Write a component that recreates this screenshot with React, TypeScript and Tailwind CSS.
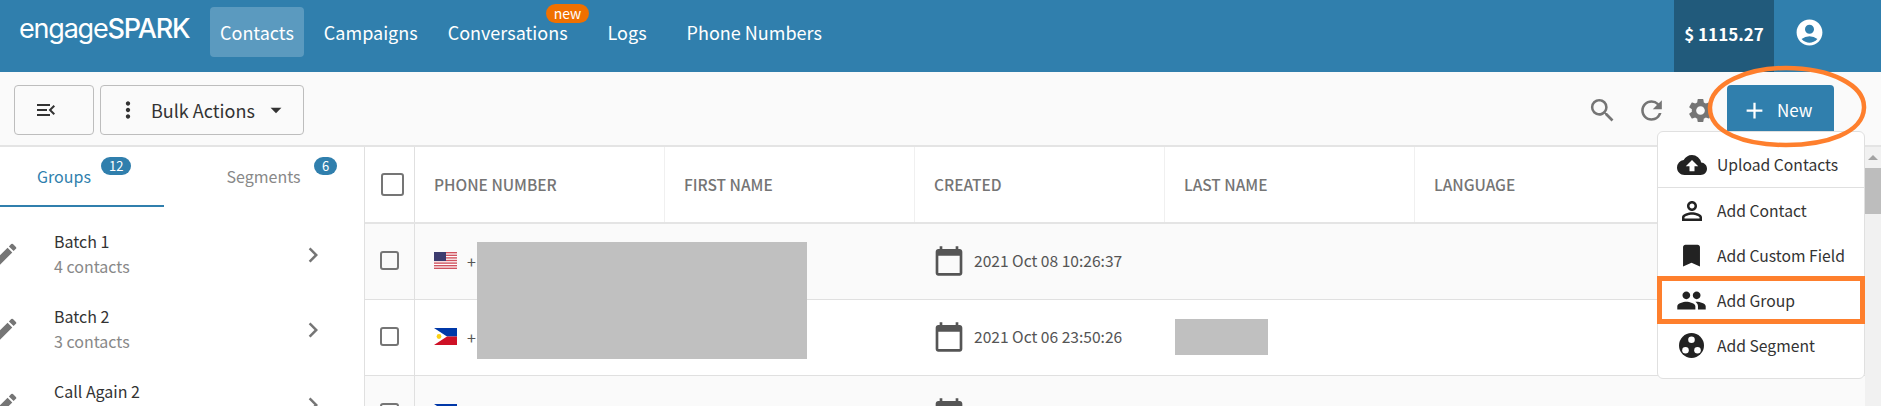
import React from 'react';
import {
  MdAccountCircle,
  MdAdd,
  MdArrowDropDown,
  MdBookmark,
  MdCalendarToday,
  MdChevronRight,
  MdCloudUpload,
  MdEdit,
  MdMenuOpen,
  MdMoreVert,
  MdOutlinePermIdentity,
  MdPeople,
  MdRefresh,
  MdSearch,
  MdSettings,
} from 'react-icons/md';

const groups = [
  { name: 'Batch 1', count: '4 contacts' },
  { name: 'Batch 2', count: '3 contacts' },
  { name: 'Call Again 2', count: '' },
];

const columns = [
  { label: 'Phone Number', width: 'w-[250px]' },
  { label: 'First Name', width: 'w-[250px]' },
  { label: 'Created', width: 'w-[250px]' },
  { label: 'Last Name', width: 'w-[250px]' },
  { label: 'Language', width: 'flex-1' },
];

const rows = [
  { flag: 'us', created: '2021 Oct 08 10:26:37', phone: true, striped: true },
  { flag: 'ph', created: '2021 Oct 06 23:50:26', phone: true, striped: false },
  { flag: 'ph', created: '', phone: false, striped: true },
];

const SegmentIcon = () => (
  <svg width="25" height="25" viewBox="0 0 25 25">
    <circle cx="12.5" cy="12.5" r="12.5" fill="#222" />
    <circle cx="12.5" cy="6.8" r="3.3" fill="#fff" />
    <circle cx="6.5" cy="17.3" r="3.3" fill="#fff" />
    <circle cx="18.5" cy="17.3" r="3.3" fill="#fff" />
  </svg>
);

const menuItems = [
  { label: 'Add Contact', icon: <MdOutlinePermIdentity className="text-[30px]" /> },
  { label: 'Add Custom Field', icon: <MdBookmark className="text-[29px]" /> },
  { label: 'Add Group', icon: <MdPeople className="text-[31px]" />, marked: true },
  { label: 'Add Segment', icon: <SegmentIcon /> },
];

const Flag = ({ kind }: { kind: string }) =>
  kind === 'us' ? (
    <svg width="23" height="17" viewBox="0 0 23 17" className="shrink-0">
      <rect width="23" height="17" fill="#fff" />
      {[0, 2.6, 5.2, 7.8, 10.4, 13, 15.6].map(y => (
        <rect key={y} y={y} width="23" height="1.4" fill="#d0535f" />
      ))}
      <rect width="12" height="9" fill="#3c3b6e" />
    </svg>
  ) : (
    <svg width="23" height="17" viewBox="0 0 23 17" className="shrink-0">
      <rect width="23" height="8.5" fill="#0038a8" />
      <rect y="8.5" width="23" height="8.5" fill="#ce1126" />
      <path d="M0 0 L13 8.5 L0 17 Z" fill="#fff" />
      <circle cx="5" cy="8.5" r="2.4" fill="#fcd116" />
    </svg>
  );

const App = () => {
  return (
    <div className="relative h-[406px] overflow-hidden bg-white font-['Noto_Sans_CJK_SC','Noto_Sans',sans-serif] text-[#333]">
      {/* Top nav */}
      <header className="flex h-[72px] items-stretch bg-[#307fad] text-white">
        <div className="ml-[19px] mt-[12px] w-[191px] font-['Inter',sans-serif] text-[27px] leading-[34px] tracking-[-1.2px]">
          engage<span className="font-medium">SPARK</span>
        </div>
        <nav className="mt-[7px] flex h-[50px] items-center gap-[10px] text-[18px] leading-[50px]">
          <a className="rounded bg-[#5b9abf] px-[10px]">Contacts</a>
          <a className="px-[10px]">Campaigns</a>
          <a className="relative mr-[10px] px-[10px]">
            Conversations
            <span className="absolute left-[108px] top-[-3px] rounded-full bg-[#f07000] px-[8px] text-[14px] leading-[19px]">new</span>
          </a>
          <a className="mr-[10px] px-[10px]">Logs</a>
          <a className="px-[10px]">Phone Numbers</a>
        </nav>
        <div className="ml-auto flex w-[100px] items-center justify-center bg-[#215a7b] pb-[4px] text-[17px] font-bold">$ 1115.27</div>
        <div className="flex w-[107px] items-center justify-center pb-[8px]">
          <MdAccountCircle className="mr-[37px] text-[31px]" />
        </div>
      </header>

      {/* Toolbar */}
      <div className="flex h-[75px] items-start border-b-2 border-[#e4e4e4] bg-[#fafafa] pt-[13px]">
        <button className="ml-[14px] flex h-[50px] w-[80px] items-center rounded border border-[#bdbdbd] pl-[19px]">
          <MdMenuOpen className="text-[24px]" />
        </button>
        <button className="ml-[6px] flex h-[50px] w-[204px] items-center rounded border border-[#bdbdbd] pl-[14px] text-[18px]">
          <MdMoreVert className="text-[26px]" />
          <span className="ml-[10px]">Bulk Actions</span>
          <MdArrowDropDown className="ml-[8px] text-[26px]" />
        </button>
        <div className="ml-auto flex h-[50px] items-center text-[#757575]">
          <MdSearch className="text-[31px]" />
          <MdRefresh className="ml-[18px] text-[31px]" />
          <MdSettings className="ml-[19px] text-[29px]" />
          <button className="ml-[12px] mr-[47px] flex h-[50px] w-[107px] items-center rounded bg-[#307fad] pl-[14px] text-[17px] text-white">
            <MdAdd className="text-[27px]" />
            <span className="ml-[9px]">New</span>
          </button>
        </div>
      </div>

      <div className="flex h-[259px]">
        {/* Groups / segments sidebar */}
        <aside className="w-[365px] shrink-0 overflow-hidden border-r border-[#e0e0e0]">
          <div className="mb-[10px] flex h-[60px] text-[16px]">
            <div className="relative flex w-[164px] items-center justify-center border-b-2 border-[#307fad] pr-[36px] text-[#307fad]">
              Groups
              <span className="absolute left-[101px] top-[10px] rounded-full bg-[#307fad] px-[8px] text-[13px] leading-[18px] text-white">12</span>
            </div>
            <div className="relative flex w-[199px] items-center justify-center pb-[2px] text-[#888]">
              Segments
              <span className="absolute left-[150px] top-[10px] rounded-full bg-[#307fad] px-[8px] text-[13px] leading-[18px] text-white">6</span>
            </div>
          </div>
          {groups.map(group => (
            <div key={group.name} className="flex h-[75px] items-center">
              <MdEdit className="ml-[-10px] mr-[34px] shrink-0 text-[30px] text-[#757575]" />
              <div className="w-[248px] pb-[2px]">
                <div className="text-[16px] leading-[24px]">{group.name}</div>
                <div className="h-[26px] text-[16px] leading-[26px] text-[#888]">{group.count}</div>
              </div>
              <MdChevronRight className="ml-[-4px] text-[30px] text-[#757575]" />
            </div>
          ))}
        </aside>

        {/* Contacts table */}
        <main className="min-w-0 flex-1">
          <div className="flex h-[77px] border-b-2 border-[#e4e4e4]">
            <div className="flex w-[50px] shrink-0 items-center border-r border-[#e0e0e0] pl-[16px]">
              <div className="h-[23px] w-[23px] rounded-[3px] border-2 border-[#757575]" />
            </div>
            {columns.map(col => (
              <div key={col.label} className={`flex items-center border-r border-[#f0f0f0] pl-[19px] text-[15.5px] font-medium uppercase text-[#757575] ${col.width}`}>
                {col.label}
              </div>
            ))}
          </div>
          {rows.map((row, i) => (
            <div key={i} className={`flex h-[76px] border-b border-[#e0e0e0] ${row.striped ? 'bg-[#fafafa]' : 'bg-white'}`}>
              <div className="flex w-[50px] shrink-0 items-center border-r border-[#e0e0e0] pb-[2px] pl-[15px]">
                <div className="h-[19px] w-[19px] rounded-[3px] border-2 border-[#757575]" />
              </div>
              <div className="flex w-[250px] items-center gap-[10px] pb-[2px] pl-[19px] text-[16px] text-[#555]">
                <Flag kind={row.flag} />
                {row.phone && <span>+</span>}
              </div>
              <div className="w-[250px]" />
              <div className="flex w-[250px] items-center pb-[2px] pl-[19px] text-[15.6px] text-[#555]">
                <MdCalendarToday className="ml-[-1px] mr-[9px] shrink-0 text-[32px] text-[#555]" />
                {row.created}
              </div>
            </div>
          ))}
        </main>

        {/* Scrollbar */}
        <div className="w-[16px] shrink-0 bg-[#f1f1f1]">
          <div className="flex h-[21px] items-center justify-center">
            <div className="h-0 w-0 border-x-[5px] border-b-[5px] border-x-transparent border-b-[#a3a3a3]" />
          </div>
          <div className="h-[46px] bg-[#bdbdbd]" />
        </div>
      </div>

      {/* Redaction blocks */}
      <div className="absolute left-[477px] top-[242px] h-[117px] w-[330px] bg-[#c0c0c0]" />
      <div className="absolute left-[1175px] top-[319px] h-[36px] w-[93px] bg-[#c0c0c0]" />

      {/* New menu */}
      <div className="absolute left-[1657px] top-[131px] w-[208px] rounded-md border border-[#e0e0e0] bg-white pb-[10px] text-[15.7px] text-[#333]">
        <div className="flex h-[56px] items-center border-b border-[#e0e0e0] pl-[14px] pt-[10px]">
          <span className="mr-[6px] flex w-[39px] shrink-0 justify-center text-[#222]">
            <MdCloudUpload className="text-[30px]" />
          </span>
          Upload Contacts
        </div>
        {menuItems.map(item => (
          <div key={item.label} className="relative flex h-[45px] items-center pl-[14px]">
            <span className="mr-[6px] flex w-[39px] shrink-0 justify-center text-[#222]">{item.icon}</span>
            {item.label}
            {item.marked && <div className="absolute inset-x-[-1px] bottom-[-1px] top-[-2px] border-[5px] border-[#fe7f2d]" />}
          </div>
        ))}
      </div>

      {/* Hand drawn highlight */}
      <svg width="170" height="92" viewBox="0 0 170 92" className="absolute left-[1702px] top-[61px]">
        <path
          d="M8 46 C9 22 46 7 84 7 C128 7 163 24 162 47 C161 72 124 84 84 84 C44 84 7 72 8 46 Z"
          fill="none"
          stroke="#fe7f2d"
          strokeWidth="4.5"
        />
      </svg>
    </div>
  );
};

export default App;
